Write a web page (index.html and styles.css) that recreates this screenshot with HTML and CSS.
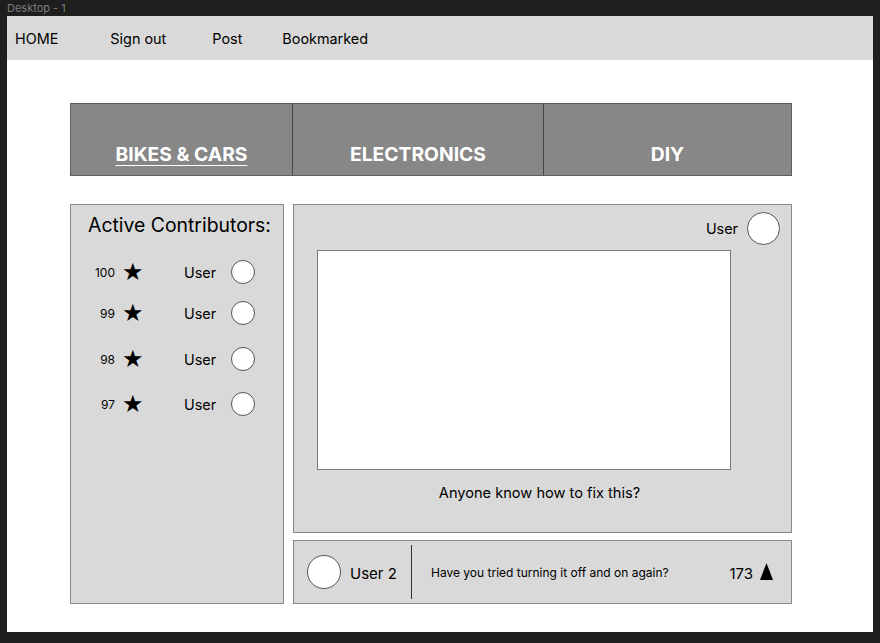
FILE: index.html
```html
<!DOCTYPE html>
<html>
<head>
<meta charset="utf-8">
<link rel="stylesheet" href="styles.css">
</head>
<body>
<div class="label">Desktop - 1</div>
<div class="frame">
  <nav class="nav">
    <a class="nav-item home">HOME</a>
    <a class="nav-item signout">Sign out</a>
    <a class="nav-item post">Post</a>
    <a class="nav-item bookmarked">Bookmarked</a>
  </nav>
  <main class="content">
    <div class="tabs">
      <div class="tab tab-1"><span class="active">BIKES &amp; CARS</span></div>
      <div class="tab tab-2"><span>ELECTRONICS</span></div>
      <div class="tab tab-3"><span>DIY</span></div>
    </div>
    <div class="columns">
      <aside class="contributors">
        <h2 class="contrib-title">Active Contributors:</h2>
        <ul class="contrib-list">
          <li class="contrib r1"><span class="score">100</span><span class="star">★</span><span class="uname">User</span><span class="avatar small"></span></li>
          <li class="contrib r2"><span class="score">99</span><span class="star">★</span><span class="uname">User</span><span class="avatar small"></span></li>
          <li class="contrib r3"><span class="score">98</span><span class="star">★</span><span class="uname">User</span><span class="avatar small"></span></li>
          <li class="contrib r4"><span class="score">97</span><span class="star">★</span><span class="uname">User</span><span class="avatar small"></span></li>
        </ul>
      </aside>
      <section class="feed">
        <article class="post-card">
          <div class="post-head"><span class="post-user">User</span><span class="avatar large"></span></div>
          <div class="post-image"></div>
          <p class="post-caption">Anyone know how to fix this?</p>
        </article>
        <div class="reply">
          <div class="reply-user"><span class="avatar reply-avatar"></span><span class="reply-name">User 2</span></div>
          <div class="reply-divider"></div>
          <p class="reply-text">Have you tried turning it off and on again?</p>
          <div class="votes"><span class="vote-count">173</span>
            <svg class="vote-icon" width="13" height="17" viewBox="0 0 13 17"><polygon points="6.5,0 13,17 0,17" fill="#000"/></svg>
          </div>
        </div>
      </section>
    </div>
  </main>
</div>
</body>
</html>
```

FILE: styles.css
```css
* { box-sizing: border-box; }
html, body { margin: 0; padding: 0; }
body {
  background: #1e1e1e;
  font-family: Inter, "Noto Sans", sans-serif;
  width: 880px;
  height: 643px;
  overflow: hidden;
}
.label {
  height: 16px;
  padding-left: 7px;
  font-size: 11px;
  line-height: 16px;
  color: #7d7d7d;
}
.frame {
  margin-left: 7px;
  width: 866px;
  height: 616px;
  background: #ffffff;
}
.nav {
  height: 44px;
  background: #d9d9d9;
  display: flex;
  align-items: center;
  padding-left: 8px;
  font-size: 14.4px;
  color: #000;
}
.nav-item { color: #000; text-decoration: none; }
.signout { margin-left: 52px; }
.post { margin-left: 46px; }
.bookmarked { margin-left: 40px; }

.content {
  padding: 43px 0 0 63px;
}
.tabs {
  width: 722px;
  height: 73px;
  display: flex;
  background: #878787;
  border: 1px solid #5e5e5e;
}
.tab {
  display: flex;
  align-items: flex-end;
  justify-content: center;
  padding-bottom: 10px;
  color: #ffffff;
  font-weight: 700;
  font-size: 19.3px;
  line-height: 22px;
}
.tab-1 { width: 222px; border-right: 1px solid #444; }
.tab-2 { width: 251px; border-right: 1px solid #444; }
.tab-3 { flex: 1; }
.active {
  text-decoration: underline;
  text-underline-offset: 4px;
  text-decoration-thickness: 1px;
}

.columns {
  margin-top: 28px;
  display: flex;
  gap: 9px;
}
.contributors {
  width: 214px;
  height: 400px;
  background: #d9d9d9;
  border: 1px solid #8a8a8a;
  padding-top: 9px;
}
.contrib-title {
  margin: 0;
  padding-left: 17px;
  font-size: 19.4px;
  font-weight: 400;
  line-height: 22px;
  color: #000;
}
.contrib-list {
  list-style: none;
  margin: 0;
  padding: 0;
}
.contrib {
  display: flex;
  align-items: center;
  height: 24px;
}
.r1 { margin-top: 24px; }
.r2 { margin-top: 17px; }
.r3 { margin-top: 22px; }
.r4 { margin-top: 21px; }
.score {
  width: 44px;
  text-align: right;
  font-size: 12px;
  color: #000;
}
.star {
  margin-left: 7px;
  font-size: 24px;
  line-height: 24px;
  width: 22px;
  color: #000;
  font-family: "DejaVu Sans", sans-serif;
}
.uname {
  margin-left: 40px;
  font-size: 14.4px;
  width: 47px;
}
.avatar {
  display: inline-block;
  border-radius: 50%;
  background: #ffffff;
  border: 1px solid #555;
  flex: none;
}
.avatar.small { width: 24px; height: 24px; }
.avatar.large { width: 33px; height: 33px; }

.feed {
  width: 499px;
  display: flex;
  flex-direction: column;
  gap: 7px;
}
.post-card {
  height: 329px;
  background: #d9d9d9;
  border: 1px solid #8a8a8a;
  padding: 7px 11px 0 23px;
  display: flex;
  flex-direction: column;
}
.post-head {
  display: flex;
  justify-content: flex-end;
  align-items: center;
  gap: 9px;
  font-size: 14.4px;
  height: 33px;
}
.post-image {
  margin-top: 5px;
  width: 414px;
  height: 220px;
  background: #ffffff;
  border: 1px solid #7a7a7a;
}
.post-caption {
  margin: 15px 0 0 0;
  text-align: center;
  font-size: 14.6px;
  line-height: 17px;
  padding-right: 18px;
  color: #000;
}
.reply {
  height: 64px;
  background: #d9d9d9;
  border: 1px solid #8a8a8a;
  display: flex;
  align-items: center;
  padding-left: 13px;
}
.reply-user {
  display: flex;
  align-items: center;
  gap: 9px;
  width: 104px;
}
.avatar.reply-avatar { width: 34px; height: 34px; }
.reply-name { font-size: 15px; margin-top: 3px; }
.reply-divider {
  width: 1px;
  height: 54px;
  background: #333;
}
.reply-text {
  margin: 0 0 0 19px;
  font-size: 12px;
  flex: 1;
}
.votes {
  display: flex;
  align-items: center;
  gap: 7px;
  padding-right: 18px;
  font-size: 15px;
}
.vote-count { margin-top: 2px; }
.vote-icon { display: block; margin-top: -1px; }
```
